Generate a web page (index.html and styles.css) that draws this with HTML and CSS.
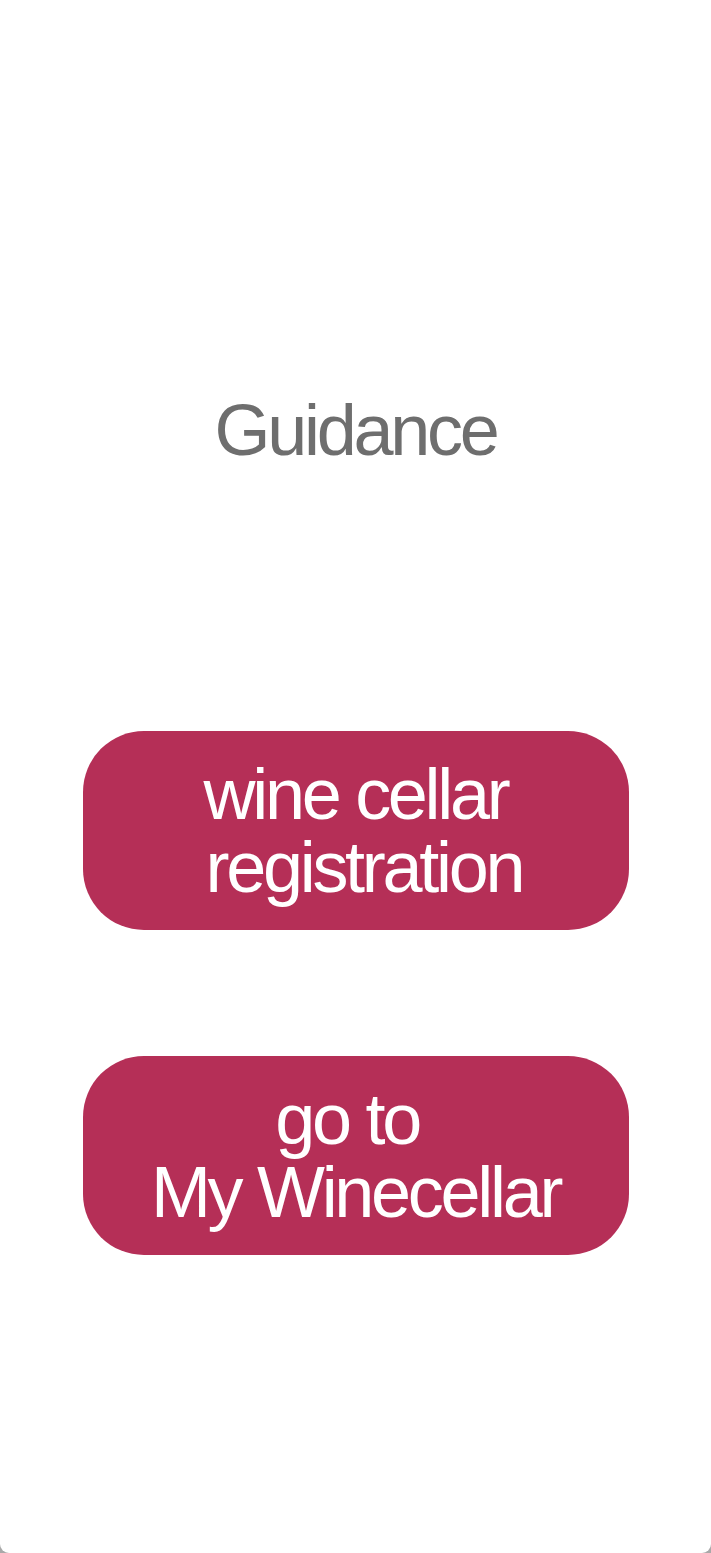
FILE: index.html
```html
<!DOCTYPE html>
<html lang="en">
<head>
<meta charset="utf-8">
<title>Guidance</title>
<link rel="stylesheet" href="styles.css">
</head>
<body>
<main class="screen">
  <h1 class="title">Guidance</h1>
  <div class="actions">
    <button class="btn" type="button"><span class="line">wine cellar</span><span class="line">&nbsp;registration</span></button>
    <button class="btn" type="button"><span class="line">go to&nbsp;</span><span class="line">My Winecellar</span></button>
  </div>
</main>
</body>
</html>
```
FILE: styles.css
```css
html, body {
  margin: 0;
  padding: 0;
  background: #a9a9a9;
}

.screen {
  box-sizing: border-box;
  width: 711px;
  height: 1553px;
  background: #ffffff;
  border-radius: 0 0 9px 9px;
  padding-top: 394px;
  display: flex;
  flex-direction: column;
  align-items: center;
  font-family: "Liberation Sans", Arial, Helvetica, sans-serif;
}

.title {
  margin: 0;
  font-weight: 400;
  font-size: 72px;
  line-height: 72px;
  letter-spacing: -3.3px;
  color: #6e6e6e;
}

.actions {
  margin-top: 265px;
  display: flex;
  flex-direction: column;
  gap: 126px;
}

.btn {
  box-sizing: border-box;
  width: 546px;
  height: 199px;
  margin: 0;
  padding: 0;
  border: none;
  border-radius: 61px;
  background: #b52f57;
  color: #ffffff;
  font-family: inherit;
  font-size: 72px;
  line-height: 73px;
  letter-spacing: -3.3px;
  display: flex;
  flex-direction: column;
  align-items: center;
  justify-content: center;
  cursor: pointer;
}

.line {
  display: block;
  white-space: pre;
}
```
